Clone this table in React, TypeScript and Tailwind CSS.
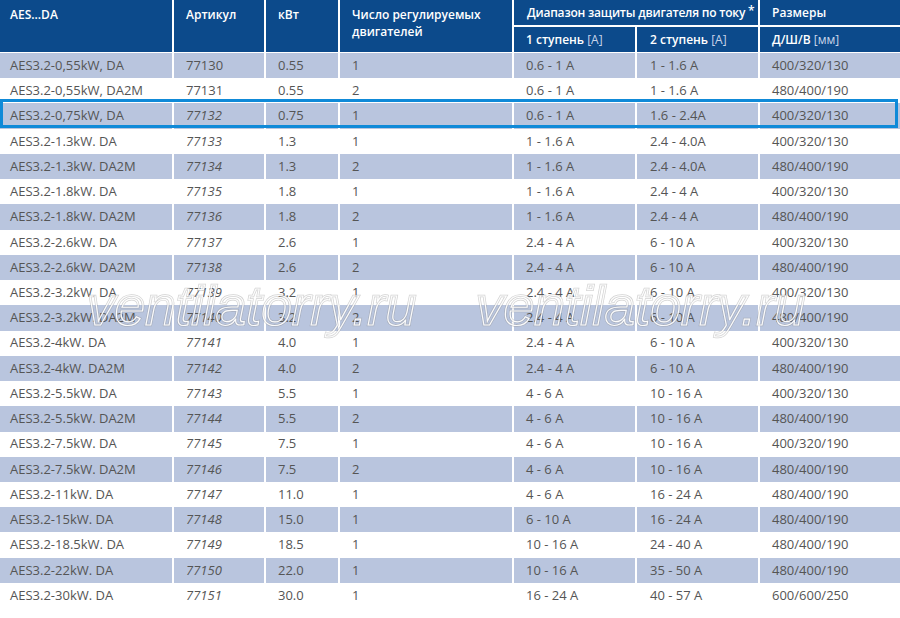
import React from "react";

const rows: string[][] = [
  ["AES3.2-0,55kW, DA", "77130", "0.55", "1", "0.6 - 1 A", "1 - 1.6 A", "400/320/130"],
  ["AES3.2-0,55kW, DA2M", "77131", "0.55", "2", "0.6 - 1 A", "1 - 1.6 A", "480/400/190"],
  ["AES3.2-0,75kW, DA", "77132", "0.75", "1", "0.6 - 1 A", "1.6 - 2.4A", "400/320/130"],
  ["AES3.2-1.3kW. DA", "77133", "1.3", "1", "1 - 1.6 A", "2.4 - 4.0A", "400/320/130"],
  ["AES3.2-1.3kW. DA2M", "77134", "1.3", "2", "1 - 1.6 A", "2.4 - 4.0A", "480/400/190"],
  ["AES3.2-1.8kW. DA", "77135", "1.8", "1", "1 - 1.6 A", "2.4 - 4 A", "400/320/130"],
  ["AES3.2-1.8kW. DA2M", "77136", "1.8", "2", "1 - 1.6 A", "2.4 - 4 A", "480/400/190"],
  ["AES3.2-2.6kW. DA", "77137", "2.6", "1", "2.4 - 4 A", "6 - 10 A", "400/320/130"],
  ["AES3.2-2.6kW. DA2M", "77138", "2.6", "2", "2.4 - 4 A", "6 - 10 A", "480/400/190"],
  ["AES3.2-3.2kW. DA", "77139", "3.2", "1", "2.4 - 4 A", "6 - 10 A", "400/320/130"],
  ["AES3.2-3.2kW. DA2M", "77140", "3.2", "2", "2.4 - 4 A", "6 - 10 A", "480/400/190"],
  ["AES3.2-4kW. DA", "77141", "4.0", "1", "2.4 - 4 A", "6 - 10 A", "400/320/130"],
  ["AES3.2-4kW. DA2M", "77142", "4.0", "2", "2.4 - 4 A", "6 - 10 A", "480/400/190"],
  ["AES3.2-5.5kW. DA", "77143", "5.5", "1", "4 - 6 A", "10 - 16 A", "400/320/130"],
  ["AES3.2-5.5kW. DA2M", "77144", "5.5", "2", "4 - 6 A", "10 - 16 A", "480/400/190"],
  ["AES3.2-7.5kW. DA", "77145", "7.5", "1", "4 - 6 A", "10 - 16 A", "400/320/190"],
  ["AES3.2-7.5kW. DA2M", "77146", "7.5", "2", "4 - 6 A", "10 - 16 A", "480/400/190"],
  ["AES3.2-11kW. DA", "77147", "11.0", "1", "4 - 6 A", "16 - 24 A", "480/400/190"],
  ["AES3.2-15kW. DA", "77148", "15.0", "1", "6 - 10 A", "16 - 24 A", "480/400/190"],
  ["AES3.2-18.5kW. DA", "77149", "18.5", "1", "10 - 16 A", "24 - 40 A", "480/400/190"],
  ["AES3.2-22kW. DA", "77150", "22.0", "1", "10 - 16 A", "35 - 50 A", "480/400/190"],
  ["AES3.2-30kW. DA", "77151", "30.0", "1", "16 - 24 A", "40 - 57 A", "600/600/250"],
];

const hdr =
  "bg-[#0c4a8b] text-white font-semibold text-[12px] leading-[17px] whitespace-nowrap";

function Watermark({ left }: { left: string }) {
  return (
    <div className={`pointer-events-none absolute top-[279px] ${left} select-none`}>
      <div className="relative font-['Liberation_Sans',Arial,sans-serif] italic text-[55px] leading-[55px] whitespace-nowrap">
        <span className="absolute left-0 top-0 text-transparent [-webkit-text-stroke:2.6px_rgba(140,140,140,0.4)]">
          ventilatorry.ru
        </span>
        <span className="relative text-transparent [-webkit-text-stroke:1.2px_rgba(255,255,255,0.95)]">
          ventilatorry.ru
        </span>
      </div>
    </div>
  );
}

export default function App() {
  return (
    <div className="relative w-[900px] h-[618px] bg-white overflow-hidden font-['Open_Sans','Noto_Sans',sans-serif]">
      <div className="grid grid-cols-[172px_90px_72px_172px_121px_121px_1fr] grid-rows-[24.5px_25.5px] gap-[2px] mb-[1px]">
        <div className={`${hdr} row-span-2 pl-[10px] pt-[6px]`}>AES...DA</div>
        <div className={`${hdr} row-span-2 pl-[12px] pt-[6px]`}>Артикул</div>
        <div className={`${hdr} row-span-2 pl-[12px] pt-[6px]`}>кВт</div>
        <div className={`${hdr} row-span-2 pl-[12px] pt-[6px]`}>
          Число регулируемых
          <br />
          двигателей
        </div>
        <div className={`${hdr} col-span-2 pl-[13px] pt-[4px] tracking-[-0.2px]`}>
          Диапазон защиты двигателя по току <span className="relative top-[-2px]">*</span>
        </div>
        <div className={`${hdr} pl-[12px] pt-[4px]`}>Размеры</div>
        <div className={`${hdr} pl-[12px] pt-[4px]`}>
          1 ступень <span className="font-normal text-[#c9d5ea]">[A]</span>
        </div>
        <div className={`${hdr} pl-[13px] pt-[4px]`}>
          2 ступень <span className="font-normal text-[#c9d5ea]">[A]</span>
        </div>
        <div className={`${hdr} pl-[12px] pt-[4px]`}>
          Д/Ш/В <span className="font-normal text-[#c9d5ea]">[мм]</span>
        </div>
      </div>

      <div className="flex flex-col">
        {rows.map((r, i) => {
          const blue = i % 2 === 0;
          const cell = `${blue ? "bg-[#b9c5de]" : "bg-white"} flex items-center text-[13px] text-[#555555] whitespace-nowrap`;
          return (
            <div
              key={i}
              className="grid grid-cols-[172px_90px_72px_172px_121px_121px_1fr] gap-x-[2px] h-[25.24px]"
            >
              <div className={`${cell} pl-[10px]`}>{r[0]}</div>
              <div className={`${cell} pl-[12px] ${i >= 2 ? "italic" : ""}`}>{r[1]}</div>
              <div className={`${cell} pl-[12px]`}>{r[2]}</div>
              <div className={`${cell} pl-[12px]`}>{r[3]}</div>
              <div className={`${cell} pl-[12px]`}>{r[4]}</div>
              <div className={`${cell} pl-[13px]`}>{r[5]}</div>
              <div className={`${cell} pl-[12px]`}>{r[6]}</div>
            </div>
          );
        })}
      </div>

      <div className="pointer-events-none absolute left-0 top-[99px] w-[898px] h-[29px] border-[3px] border-[#0f8ad8]" />

      <Watermark left="left-[87px]" />
      <Watermark left="left-[476px]" />
    </div>
  );
}
